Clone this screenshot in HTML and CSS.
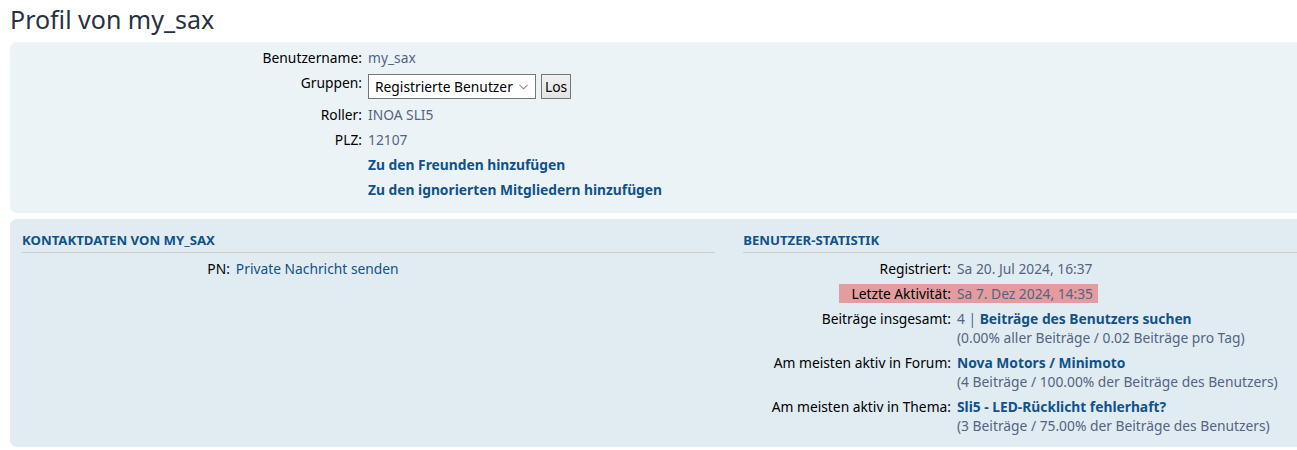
FILE: index.html
```html
<!DOCTYPE html>
<html lang="de">
<head>
<meta charset="utf-8">
<title>Profil von my_sax</title>
<link rel="stylesheet" href="styles.css">
</head>
<body>
<div class="wrap">
  <h2 class="page-title">Profil von my_sax</h2>

  <div class="panel bg1">
    <dl class="details top">
      <div class="row"><dt>Benutzername:</dt><dd><span class="val">my_sax</span></dd></div>
      <div class="row row-select"><dt>Gruppen:</dt><dd><span class="sel"><select class="grp"><option>Registrierte Benutzer</option></select><svg class="chev" width="9" height="6" viewBox="0 0 9 6"><path d="M0.5 0.8 L4.5 4.8 L8.5 0.8" fill="none" stroke="#8a8a8a" stroke-width="1.1"/></svg></span><button class="btn" type="button">Los</button></dd></div>
      <div class="row"><dt>Roller:</dt><dd><span class="val">INOA SLI5</span></dd></div>
      <div class="row"><dt>PLZ:</dt><dd><span class="val">12107</span></dd></div>
      <div class="row"><dt></dt><dd><a class="strong" href="#">Zu den Freunden hinzufügen</a></dd></div>
      <div class="row"><dt></dt><dd><a class="strong" href="#">Zu den ignorierten Mitgliedern hinzufügen</a></dd></div>
    </dl>
  </div>

  <div class="panel bg2">
    <div class="columns">
      <div class="column">
        <h3 class="col-title">Kontaktdaten von my_sax</h3>
        <dl class="details">
          <div class="row"><dt>PN:</dt><dd><a class="plain" href="#">Private Nachricht senden</a></dd></div>
        </dl>
      </div>
      <div class="column">
        <h3 class="col-title">Benutzer-Statistik</h3>
        <dl class="details">
          <div class="row"><dt>Registriert:</dt><dd><span class="val">Sa 20. Jul 2024, 16:37</span></dd></div>
          <div class="row row-hl"><dt><span class="hl hl-l">Letzte Aktivität:</span></dt><dd class="dd-hl"><span class="hl hl-r">Sa 7. Dez 2024, 14:35</span></dd></div>
          <div class="row"><dt>Beiträge insgesamt:</dt><dd><span class="val">4 | </span><a class="strong" href="#">Beiträge des Benutzers suchen</a><br><span class="val">(0.00% aller Beiträge / 0.02 Beiträge pro Tag)</span></dd></div>
          <div class="row"><dt>Am meisten aktiv in Forum:</dt><dd><a class="strong" href="#">Nova Motors / Minimoto</a><br><span class="val">(4 Beiträge / 100.00% der Beiträge des Benutzers)</span></dd></div>
          <div class="row"><dt>Am meisten aktiv in Thema:</dt><dd><a class="strong" href="#">Sli5 - LED-Rücklicht fehlerhaft?</a><br><span class="val">(3 Beiträge / 75.00% der Beiträge des Benutzers)</span></dd></div>
        </dl>
      </div>
    </div>
  </div>
</div>
</body>
</html>
```

FILE: styles.css
```css
html, body {
  margin: 0;
  padding: 0;
  background: #ffffff;
  overflow: hidden;
}

body {
  font-family: "Noto Sans", "Open Sans", "DejaVu Sans", sans-serif;
  font-size: 13.8px;
  color: #000000;
}

.wrap {
  width: 1438px;
  padding: 0 10px;
}

.page-title {
  font-size: 25px;
  font-weight: normal;
  line-height: 31px;
  color: #28313f;
  margin: 4px 0 7px 0;
  padding-left: 0;
}

.panel {
  border-radius: 7px;
  padding: 6px 12px 8px 12px;
  margin-bottom: 6px;
}

.bg1 { background: #ecf3f7; }
.bg2 { background: #e1ebf2; padding-top: 13px; padding-bottom: 6px; }

.details {
  margin: 0;
  padding: 0;
}

.row {
  display: flex;
  align-items: flex-start;
  line-height: 19px;
  margin-bottom: 6px;
}

.details dt {
  width: 30%;
  flex: none;
  text-align: right;
  margin: 0;
}

.details.top dt {
  width: 340px;
}

.details dd {
  margin: 0;
  padding-left: 6px;
}

.val { color: #536482; }

a.strong {
  color: #105289;
  font-weight: bold;
  text-decoration: none;
}

a.plain {
  color: #105289;
  text-decoration: none;
}

.row-select {
  margin-bottom: 6px;
}

.row-select dd {
  display: flex;
  align-items: flex-start;
}

.sel {
  position: relative;
  display: inline-block;
}

.grp {
  -webkit-appearance: none;
  appearance: none;
  width: 168px;
  height: 25px;
  margin: 1px 0 0 0;
  font-family: "Noto Sans", "Open Sans", sans-serif;
  font-size: 13.8px;
  color: #000;
  background: #ffffff;
  border: 1px solid #767676;
  border-radius: 0;
  padding: 0 20px 0 6px;
  display: block;
}

.chev {
  position: absolute;
  right: 8px;
  top: 11px;
}

.btn {
  height: 25px;
  margin-top: 1px;
  margin-left: 5px;
  padding: 0 3px;
  font-family: "Noto Sans", "Open Sans", sans-serif;
  font-size: 13.8px;
  color: #000;
  background: linear-gradient(#f0f0f0, #e4e4e4);
  border: 1px solid #767676;
  border-radius: 0;
}

.columns {
  display: flex;
  justify-content: space-between;
}

.column {
  width: 49%;
}

.col-title {
  font-size: 13.2px;
  line-height: 16px;
  font-weight: bold;
  text-transform: uppercase;
  color: #105289;
  margin: 0 0 6px 0;
  padding-bottom: 4px;
  border-bottom: 1px solid #cccccc;
}

.row-hl {
  margin-top: 1px;
}

.row-hl + .row {
  margin-top: 1px;
}

.hl {
  background: #e39ca0;
}

.hl-l {
  padding-left: 12px;
}

.details dd.dd-hl {
  padding-left: 0;
}

.hl-r {
  color: #536482;
  padding-left: 6px;
  padding-right: 5px;
}
```
